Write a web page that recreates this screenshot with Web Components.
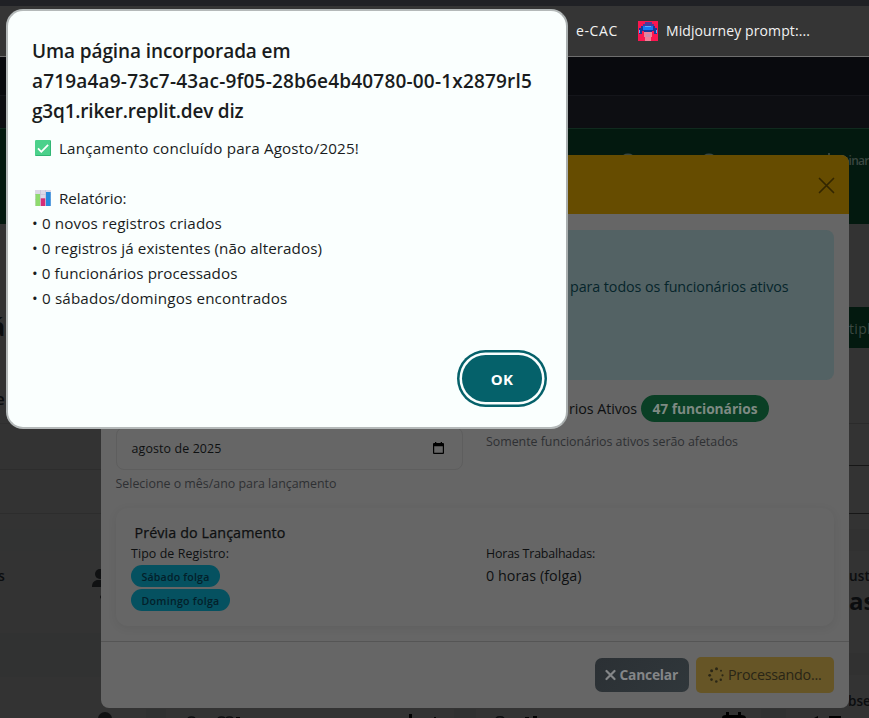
<!DOCTYPE html>
<html lang="pt-BR">
<head>
<meta charset="utf-8">
<title>Lançamento</title>
<style>
html,body{margin:0;height:100%;overflow:hidden;background:#333}
body{font-family:"Open Sans","Noto Sans",sans-serif;font-size:15px;color:#0d0f10}
</style>
</head>
<body>
<app-window></app-window>
<script>
const define = (name, html, setup) => customElements.define(name, class extends HTMLElement {
  connectedCallback() {
    if (this.shadowRoot) return;
    const t = document.createElement('template');
    t.innerHTML = html;
    this.attachShadow({mode: 'open'}).append(t.content.cloneNode(true));
    if (setup) setup(this);
  }
});

/* One line of text whose tracking is adjusted so that it fills the width "w". */
define('fit-text', `<style>
:host{display:block;white-space:pre;flex:none;line-height:inherit}
span{display:inline-block}</style><span><slot></slot></span>`, el => {
  const w = +el.getAttribute('w');
  if (el.hasAttribute('size')) el.style.fontSize = el.getAttribute('size') + 'px';
  if (!w) return;
  const span = el.shadowRoot.querySelector('span');
  const n = [...el.textContent].length;
  el.style.width = w + 'px';
  el.style.letterSpacing = (w - span.getBoundingClientRect().width) / n + 'px';
});

/* Horizontal slice of a page column. */
define('page-band', `<style>
:host{display:flex;align-items:center;box-sizing:border-box;flex:none;overflow:hidden;white-space:nowrap}
</style><slot></slot>`, el => {
  el.style.height = el.getAttribute('h') + 'px';
  if (el.hasAttribute('bg')) el.style.background = el.getAttribute('bg');
  if (el.hasAttribute('line')) el.style.borderBottom = '1px solid ' + el.getAttribute('line');
});

define('ui-badge', `<style>
:host{display:flex;align-items:center;justify-content:center;border-radius:99px;box-sizing:border-box;width:max-content;font-weight:600}
:host([kind=info]){background:#055160;color:#03202a;height:22px;padding:1px 10.5px 0;font-size:11px;line-height:22px}
:host([kind=success]){background:#0a3f25;color:#7e8a83;height:27px;padding:0 11.5px;font-size:14.5px;font-weight:700}
</style><slot></slot>`);

define('ui-button', `<style>
:host{display:flex;align-items:center;box-sizing:border-box}
:host([kind=secondary]){width:94px;height:34px;border-radius:7px;background:linear-gradient(135deg,#2b3034,#30373b);color:#848688;font-weight:700;padding:1px 0 0 10px;gap:3.5px}
:host([kind=warning]){width:138px;height:36px;border-radius:5px;background:#665526;color:#292516;padding:1px 0 0 12px;gap:4px}
svg{display:none;flex:none}
:host([kind=secondary]) .x,:host([kind=warning]) .spin{display:block}
</style>
<svg class="x" width="11" height="12" viewBox="0 0 11 12"><path d="M1.5 2l8 8M9.5 2l-8 8" stroke="#848688" stroke-width="2.2" stroke-linecap="round"/></svg>
<svg class="spin" width="16" height="16" viewBox="0 0 16 16" fill="#2b2716"><circle cx="8.5" cy="1.8" r="1.5"/><circle cx="3.6" cy="3.8" r="1.5"/><circle cx="1.7" cy="8.3" r="1.4"/><circle cx="3.5" cy="12.6" r="1.3"/><circle cx="8.3" cy="14.5" r="1.3"/><circle cx="12.8" cy="12.7" r="1.2"/><circle cx="14.5" cy="8.3" r="1.1"/><circle cx="13" cy="3.8" r="1"/></svg>
<slot></slot>`);

define('bookmarks-bar', `<style>
:host{display:flex;align-items:center;box-sizing:border-box;height:57px;flex:none;border-top:6px solid #202125;border-bottom:1px solid #6e6e6e;background:#353535;color:#f2f2f2;line-height:20px;padding-left:576px}
svg{margin:0 8px 0 20px;flex:none}
</style>
<fit-text size="14" w="42">e-CAC</fit-text>
<svg width="20" height="20" viewBox="0 0 20 20" shape-rendering="crispEdges"><path fill="#fb1650" d="M0 0h20v20H0z"/><path fill="#4a3a9c" d="M5 3h2V1h7v2h2v3H5z"/><path fill="#ef7f98" d="M6 9h8v7h-1v4H7v-4H6z"/><path fill="#c98bb0" d="M8 13h4v3H8z"/><path fill="#173a9a" d="M3 5h14v5H3zM6 10h8v1H6zM1 7h3v6H1zM16 7h3v6h-3z"/><path fill="#167af4" d="M5 5h10v4H5z"/><path fill="#55b2ff" d="M7 5h6v1H7zM1 9h1v3H1zM18 9h1v3h-1z"/></svg>
<fit-text size="14" w="144">Midjourney prompt:...</fit-text>`);

define('page-backdrop', `<style>
:host{display:flex;flex-direction:column;flex:1;min-height:0;background:#333;color:#0b0d0f}
.nav{display:flex;box-sizing:border-box;height:95px;padding:4px 0 0 618px;background:#03190f;color:#3a4640;font-weight:600;flex:none}
.cols{display:grid;grid-template-columns:101px 1fr 20px;height:485px;flex:none}
.cols>div{display:flex;flex-direction:column;min-width:0;overflow:hidden}
.foot{display:grid;grid-template-columns:146px 20px 288px 22px 285px 25px 1fr;height:9px;overflow:hidden;background:#313131}
.foot>div{display:flex;overflow:hidden;background:#333}
.foot>i{background:#303131}
svg{flex:none}
</style>
<page-band h="39" bg="#090a0e" line="#14151a"></page-band>
<page-band h="33" bg="#0d0e12" line="#102a1e"></page-band>
<div class="nav"><svg width="251" height="64" viewBox="0 0 251 64"><path d="M6 22.500a5 3 0 0 1 8 0M87 22.500a5 3 0 0 1 8 0M211 20v4" stroke="#3a4640" stroke-width="1.800" fill="none"/><text x="230.500" y="32" fill="#3a4640" font-size="12" textLength="21">inar</text></svg></div>
<div class="cols">
 <div>
  <page-band h="82"></page-band>
  <page-band h="40"><fit-text size="25" style="font-weight:700;margin-left:-10px">á</fit-text></page-band>
  <page-band h="40"></page-band>
  <page-band h="24"><fit-text size="17" style="font-weight:600;margin-left:-5px">e</fit-text></page-band>
  <page-band h="14" line="#2f2f2f"></page-band>
  <page-band h="46" line="#2d2d2d"></page-band>
  <page-band h="44" line="#2d2d2d"></page-band>
  <page-band h="15"></page-band>
  <page-band h="22" bg="#323333"></page-band>
  <page-band h="82"><fit-text size="14" style="font-weight:600;margin:-34px 0 0 -2px">s</fit-text><svg style="margin:-16px 0 0 87px" width="11" height="32" viewBox="0 0 11 32" fill="#101112"><circle cx="8" cy="6" r="5"/><path d="M0 19c0-5 3-7 6-7h5v7zM8 29q0-2 3-2v4q-3 0-3-2"/></svg></page-band>
  <page-band h="44" bg="#313232"></page-band>
  <page-band h="32"></page-band>
 </div>
 <div></div>
 <div>
  <page-band h="83"></page-band>
  <page-band h="41" bg="#03190f" style="color:#3c4841;padding-top:1px"><fit-text size="14" w="22">tipl</fit-text></page-band>
  <page-band h="76" line="#2b2b2b"></page-band>
  <page-band h="42" line="#171717"></page-band>
  <page-band h="48" line="#171717"></page-band>
  <page-band h="15"></page-band>
  <page-band h="22" bg="#313131"></page-band>
  <page-band h="36" style="padding-top:13px"><fit-text size="13.5" w="21" style="font-weight:600">ust</fit-text></page-band>
  <page-band h="30"><fit-text size="24" style="font-weight:700;margin-top:-4px">as</fit-text></page-band>
  <page-band h="36"></page-band>
  <page-band h="22" bg="#313131"></page-band>
  <page-band h="34" style="padding-top:17px"><fit-text size="13.5" style="font-weight:600;margin-left:-1px">bse</fit-text></page-band>
 </div>
</div>
<div class="foot">
 <div><svg width="120" height="9"><circle cx="105" cy="10" r="7" fill="#101112"/></svg></div><i></i>
 <div><svg width="288" height="9"><path d="M22 9a5 3 0 0 1 7 0M52 9a5 3 0 0 1 7 0M60 9a5 3 0 0 1 7 0" fill="none" stroke="#0b0d0f" stroke-width="1.500"/><path d="M243 9V5h3v4M268 8h2v1h-2M70 8h4v1h-4"/></svg></div><i></i>
 <div><svg width="285" height="9"><path d="M20 9a5 3 0 0 1 8 0" fill="none" stroke="#0b0d0f" stroke-width="1.500"/><path d="M49 8h4v1h-4M57 7h4v2h-4M246 9c0-2 1-3 4-3V3h3v3h9V3h3v3c3 0 5 1 5 3"/></svg></div><i></i>
 <div><svg width="83" height="9"><path d="M28 9l4-2v2M43 7h12v2H43z"/></svg></div>
</div>`);

define('launch-modal', `<style>
:host{display:flex;flex-direction:column;position:absolute;left:101px;top:155px;width:748px;height:553px;box-sizing:border-box;border-radius:8px;background:#666;overflow:hidden;color:#0e1011;line-height:20px}
header{display:flex;align-items:center;justify-content:flex-end;height:59px;background:#664c00;padding:2px 14px 0 0;box-sizing:border-box;flex:none}
main{display:flex;flex-direction:column;padding:16px 15px 0;height:427px;box-sizing:border-box;flex:none}
.alert{display:flex;align-items:center;box-sizing:border-box;height:150px;padding:0 0 36px 454px;border-radius:8px;background:#536264;color:#06252b;flex:none}
.fields{display:grid;grid-template-columns:347px 348px;column-gap:23px;height:128px;flex:none}
.left{display:flex;flex-direction:column;padding-top:47px}
.month{display:flex;align-items:center;justify-content:space-between;box-sizing:border-box;height:43px;border:1px solid #5e5e5e;border-radius:8px;padding:0 18px 0 14.5px}
.month svg{margin-top:-1px}
.help{color:#2e3033;line-height:20px}
.left .help{margin:4px 0 0 -.5px}
.count{display:flex;align-items:center;justify-content:flex-end;gap:4px;height:27px;margin:15px 65px 0 0}
.right .help{margin-top:10px}
.card{display:flex;flex-direction:column;box-sizing:border-box;height:118px;border-radius:12px;padding:15px 15px 0;box-shadow:0 2px 10px rgba(0,0,0,.07);flex:none}
.grid{display:grid;grid-template-columns:355px 1fr;padding-top:1px}
.tags{display:flex;flex-direction:column;gap:2px;margin-top:1px}
footer{display:flex;align-items:center;justify-content:flex-end;gap:7px;padding-right:15px;border-top:1px solid #555;flex:1;box-sizing:border-box}
footer>*{margin-top:-1px}
</style>
<header><svg width="17" height="17" viewBox="0 0 17 17"><path d="M1.500 1.500l14 14M15.500 1.500l-14 14" stroke="#332600" stroke-width="1.700" stroke-linecap="round"/></svg></header>
<main>
 <div class="alert"><fit-text size="14.3" w="218.5">para todos os funcionários ativos</fit-text></div>
 <div class="fields">
  <div class="left">
   <div class="month"><fit-text size="12.4" w="90">agosto de 2025</fit-text><svg width="11" height="13" viewBox="0 0 11 13"><path fill="#000" fill-rule="evenodd" d="M0 2q0-1 1-1h1V0h1.300v1h4.400V0H9v1h1q1 0 1 1v9q0 1-1 1H1q-1 0-1-1zM1.200 4.200v6.600h8.600V4.200z"/></svg></div>
   <fit-text class="help" size="12.4" w="221">Selecione o mês/ano para lançamento</fit-text>
  </div>
  <div class="right">
   <div class="count"><fit-text size="14.3" w="68">rios Ativos</fit-text><ui-badge kind="success"><fit-text size="13.8" w="105">47 funcionários</fit-text></ui-badge></div>
   <fit-text class="help" size="12.4" w="252">Somente funcionários ativos serão afetados</fit-text>
  </div>
 </div>
 <div class="card">
  <fit-text size="14.3" w="151" style="font-weight:500;margin-left:3.5px;-webkit-text-stroke:.25px #0e1011">Prévia do Lançamento</fit-text>
  <div class="grid">
   <div><fit-text size="12.4" w="98">Tipo de Registro:</fit-text>
    <div class="tags"><ui-badge kind="info"><fit-text size="10.6" w="68">Sábado folga</fit-text></ui-badge><ui-badge kind="info"><fit-text size="10.6" w="78">Domingo folga</fit-text></ui-badge></div></div>
   <div><fit-text size="12.4" w="109">Horas Trabalhadas:</fit-text><fit-text size="14.3" w="95.5" style="margin-top:2px">0 horas (folga)</fit-text></div>
  </div>
 </div>
</main>
<footer><ui-button kind="secondary"><fit-text size="13.8" w="58.5">Cancelar</fit-text></ui-button><ui-button kind="warning"><fit-text size="14.3" w="93.5">Processando...</fit-text></ui-button></footer>`);

define('alert-dialog', `<style>
:host{display:flex;flex-direction:column;position:absolute;left:5.5px;top:9px;width:562px;height:420px;box-sizing:border-box;border:2px solid #b4b9b9;border-right-color:#a9afaf;border-radius:17px;background:#fafffe;color:#191c1d;padding:25px 19px 20px 24.5px}
.title{font-weight:600;line-height:30px;color:#191c1d}
.msg{display:flex;flex-direction:column;line-height:25px;margin-top:10px}
.icon{display:flex;align-items:center;gap:8px;padding-left:3px;height:25px}
.icon svg{margin-top:-1px}
.gap{height:25px}
button{display:flex;align-items:center;justify-content:center;align-self:flex-end;margin-top:auto;box-sizing:border-box;width:80px;height:47px;border:0;border-radius:24px;background:#05616a;color:#fff;font:600 15px "Open Sans",sans-serif;box-shadow:0 0 0 2.5px #fafffe,0 0 0 5px #05616a;margin-right:4.5px;margin-bottom:5px;padding:1px 0 0}
</style>
<div class="title"><fit-text size="19" w="258.5">Uma página incorporada em</fit-text><fit-text size="19" w="500">a719a4a9-73c7-43ac-9f05-28b6e4b40780-00-1x2879rl5</fit-text><fit-text size="19" w="211.5">g3q1.riker.replit.dev diz</fit-text></div>
<div class="msg">
 <div class="icon"><svg width="16" height="16" viewBox="0 0 16 16"><rect width="16" height="16" rx="1.200" fill="#4bd18b"/><path d="M.5 15.500h15V.8" fill="none" stroke="#31b674"/><path d="M3 8.300l3.300 3.500 6.800-7" fill="none" stroke="#fff" stroke-width="1.800"/></svg><fit-text size="15.2" w="300">Lançamento concluído para Agosto/2025!</fit-text></div>
 <div class="gap"></div>
 <div class="icon"><svg width="16" height="16" viewBox="0 0 16 16"><path fill="#ddd8e8" d="M0 0h16v16H0z"/><path d="M0 4.500h16M0 9.500h16M5.500 0v16M10.500 0v16" stroke="#c5bfd6" stroke-width=".7"/><path fill="#8edb6e" d="M.5 4H5v12H.5z"/><path fill="#d42d78" d="M5.800 8.300h4.400V16H5.800z"/><path fill="#2589dd" d="M11 2h4.700v14H11z"/></svg><fit-text size="15.2" w="67.5">Relatório:</fit-text></div>
 <fit-text size="15.2" w="190">• 0 novos registros criados</fit-text>
 <fit-text size="15.2" w="290">• 0 registros já existentes (não alterados)</fit-text>
 <fit-text size="15.2" w="205.5">• 0 funcionários processados</fit-text>
 <fit-text size="15.2" w="255.5">• 0 sábados/domingos encontrados</fit-text>
</div>
<button><fit-text size="15" w="22.5" style="font-weight:700">OK</fit-text></button>`);

define('app-window', `<style>
:host{display:flex;flex-direction:column;position:relative;width:869px;height:718px;overflow:hidden}
</style>
<bookmarks-bar></bookmarks-bar>
<page-backdrop></page-backdrop>
<launch-modal></launch-modal>
<alert-dialog></alert-dialog>`);
</script>
</body>
</html>
